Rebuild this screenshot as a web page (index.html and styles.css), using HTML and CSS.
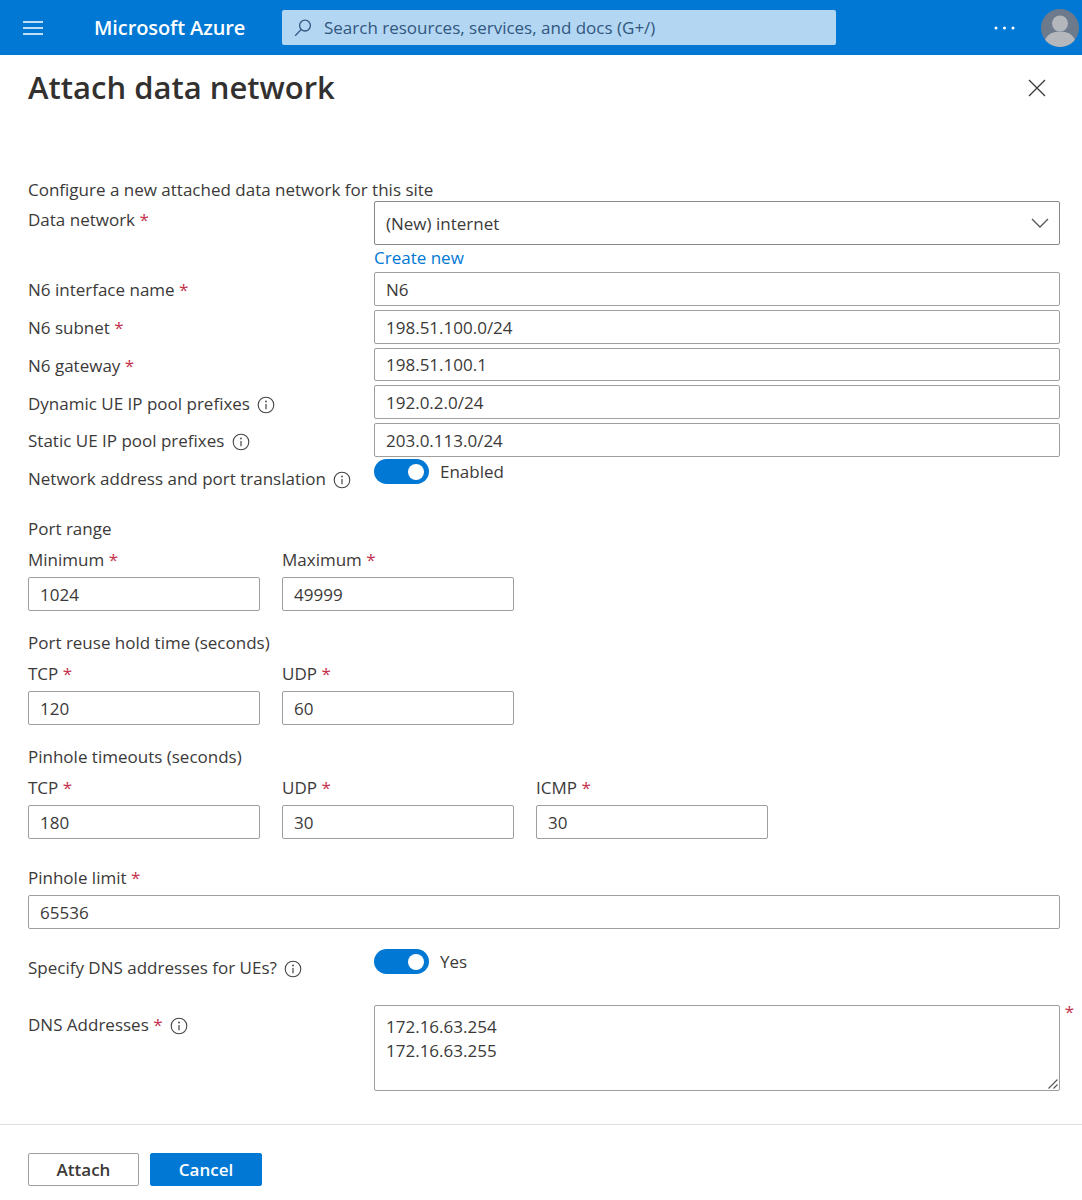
FILE: index.html
```html
<!DOCTYPE html>
<html lang="en">
<head>
    <meta charset="UTF-8">
    <meta name="viewport" content="width=device-width, initial-scale=1.0">
    <title>Attach data network</title>
    <link rel="stylesheet" href="styles.css">
</head>
<body>
    <header class="topbar">
        <svg class="menu-icon" width="20" height="14" viewBox="0 0 20 14"><path d="M0 1h20M0 7h20M0 13h20" stroke="#fff" stroke-width="1.4"/></svg>
        <div class="brand">Microsoft Azure</div>
        <div class="search">
            <svg width="18" height="18" viewBox="0 0 18 18" fill="none" stroke="#31567f" stroke-width="1.3"><circle cx="11" cy="6.6" r="5.4"/><path d="M7 10.6 1.2 16.8"/></svg>
            <span>Search resources, services, and docs (G+/)</span>
        </div>
        <svg class="more" width="21" height="4" viewBox="0 0 21 4" fill="#fff"><circle cx="2" cy="2" r="1.500"/><circle cx="10.500" cy="2" r="1.500"/><circle cx="19" cy="2" r="1.500"/></svg>
        <svg class="avatar" width="38" height="38" viewBox="0 0 38 38"><defs><clipPath id="avatarClip"><circle cx="19" cy="19" r="19"/></clipPath></defs><circle cx="19" cy="19" r="19" fill="#6c7a8c"/><g clip-path="url(#avatarClip)" fill="#b4b8bd"><circle cx="19" cy="14.5" r="8"/><path d="M3 38c0-11 6-15.500 16-15.500S35 27 35 38z"/></g></svg>
    </header>

    <main class="panel">
        <div class="title-row">
            <h1>Attach data network</h1>
            <svg class="close" width="18" height="18" viewBox="0 0 18 18"><path d="M1 1l16 16M17 1 1 17" stroke="#3b3a39" stroke-width="1.3"/></svg>
        </div>

        <p class="intro">Configure a new attached data network for this site</p>

        <div class="row row-select">
            <label>Data network <span class="req">*</span></label>
            <div>
                <div class="select">
                    <span>(New) internet</span>
                    <svg width="18" height="10" viewBox="0 0 18 10" fill="none" stroke="#555" stroke-width="1.3"><path d="M1 1l8 8 8-8"/></svg>
                </div>
                <a class="link" href="#">Create new</a>
            </div>
        </div>

        <div class="stack">
            <div class="row">
                <label>N6 interface name <span class="req">*</span></label>
                <input class="input" value="N6">
            </div>
            <div class="row">
                <label>N6 subnet <span class="req">*</span></label>
                <input class="input" value="198.51.100.0/24">
            </div>
            <div class="row">
                <label>N6 gateway <span class="req">*</span></label>
                <input class="input" value="198.51.100.1">
            </div>
            <div class="row">
                <label>Dynamic UE IP pool prefixes <svg class="info"><use href="#infoIcon"/></svg></label>
                <input class="input" value="192.0.2.0/24">
            </div>
            <div class="row">
                <label>Static UE IP pool prefixes <svg class="info"><use href="#infoIcon"/></svg></label>
                <input class="input" value="203.0.113.0/24">
            </div>
        </div>

        <div class="row row-toggle nat">
            <label>Network address and port translation <svg class="info"><use href="#infoIcon"/></svg></label>
            <div class="toggle-wrap"><span class="toggle"></span><span>Enabled</span></div>
        </div>

        <section class="group group-port">
            <h2>Port range</h2>
            <div class="fields">
                <div class="field">
                    <label>Minimum <span class="req">*</span></label>
                    <input class="input" value="1024">
                </div>
                <div class="field">
                    <label>Maximum <span class="req">*</span></label>
                    <input class="input" value="49999">
                </div>
            </div>
        </section>

        <section class="group">
            <h2>Port reuse hold time (seconds)</h2>
            <div class="fields">
                <div class="field">
                    <label>TCP <span class="req">*</span></label>
                    <input class="input" value="120">
                </div>
                <div class="field">
                    <label>UDP <span class="req">*</span></label>
                    <input class="input" value="60">
                </div>
            </div>
        </section>

        <section class="group">
            <h2>Pinhole timeouts (seconds)</h2>
            <div class="fields">
                <div class="field">
                    <label>TCP <span class="req">*</span></label>
                    <input class="input" value="180">
                </div>
                <div class="field">
                    <label>UDP <span class="req">*</span></label>
                    <input class="input" value="30">
                </div>
                <div class="field">
                    <label>ICMP <span class="req">*</span></label>
                    <input class="input" value="30">
                </div>
            </div>
        </section>

        <section class="group group-limit">
            <label>Pinhole limit <span class="req">*</span></label>
            <input class="input" value="65536">
        </section>

        <div class="row row-toggle dns-toggle">
            <label>Specify DNS addresses for UEs? <svg class="info"><use href="#infoIcon"/></svg></label>
            <div class="toggle-wrap"><span class="toggle"></span><span>Yes</span></div>
        </div>

        <div class="row row-dns">
            <label>DNS Addresses <span class="req">*</span> <svg class="info"><use href="#infoIcon"/></svg></label>
            <div class="dns-box">
                <textarea class="input dns-input">172.16.63.254
172.16.63.255</textarea>
                <span class="req dns-req">*</span>
                <svg class="grip" width="10" height="10" viewBox="0 0 10 10" fill="none" stroke="#555" stroke-width="1.1"><path d="M.5 9.500l9-9M5.500 9.500l4-4"/></svg>
            </div>
        </div>
    </main>

    <footer class="actions">
        <button class="btn">Attach</button>
        <button class="btn btn-primary">Cancel</button>
    </footer>

    <svg class="icon-defs" width="0" height="0">
        <symbol id="infoIcon" viewBox="0 0 18 18">
            <circle cx="9" cy="9" r="7.8" fill="none" stroke="#444" stroke-width="1.1"/>
            <path d="M9 8v5.200" stroke="#444" stroke-width="1.2"/>
            <circle cx="9" cy="5.500" r=".9" fill="#444"/>
        </symbol>
    </svg>
</body>
</html>
```

FILE: styles.css
```css
* {
    box-sizing: border-box;
}
body {
    margin: 0;
    font-family: "Open Sans", "Noto Sans", Arial, sans-serif;
    font-size: 17px;
    color: #3b3a39;
    background: #fff;
}
.topbar {
    display: flex;
    align-items: center;
    height: 55px;
    background: #0078d4;
    padding-left: 23px;
    color: #fff;
}
.brand {
    margin-left: 51px;
    width: 188px;
    font-size: 20px;
    font-weight: 600;
    letter-spacing: -0.1px;
    white-space: nowrap;
}
.search {
    display: flex;
    align-items: center;
    gap: 12px;
    width: 554px;
    height: 35px;
    padding-left: 12px;
    background: #b3d6f2;
    border-radius: 2px;
    color: #31567f;
    white-space: nowrap;
}
.more {
    margin-left: 158px;
}
.avatar {
    margin-left: 26px;
    flex: none;
}
.panel {
    padding: 0 22px 0 28px;
}
.title-row {
    display: flex;
    justify-content: space-between;
    align-items: center;
    height: 64px;
}
h1 {
    margin: 0;
    font-size: 31px;
    font-weight: 600;
    color: #323130;
}
.close {
    margin: 2px 14px 0 0;
}
.intro {
    margin: 59px 0 0;
    line-height: 24px;
    height: 23px;
}
.row {
    display: grid;
    grid-template-columns: 346px 1fr;
    align-items: center;
}
.stack label {
    padding-top: 2px;
}
label {
    white-space: nowrap;
}
.req {
    color: #c4314b;
}
.info {
    width: 18px;
    height: 18px;
    margin-left: 3px;
    vertical-align: -4px;
}
.icon-defs {
    position: absolute;
}
.row-select {
    align-items: start;
}
.row-select label {
    padding-top: 7px;
}
.select {
    display: flex;
    justify-content: space-between;
    align-items: center;
    height: 44px;
    padding: 0 10px 0 11px;
    border: 1px solid #8a8886;
    border-radius: 2px;
}
.link {
    display: block;
    height: 27px;
    line-height: 25px;
    color: #0078d4;
    text-decoration: none;
}
.stack {
    display: flex;
    flex-direction: column;
    gap: 4px;
}
.input {
    display: block;
    width: 100%;
    height: 33.75px;
    padding: 1px 11px 0;
    border: 1px solid #a19f9d;
    border-radius: 2px;
    font: inherit;
    color: #3b3a39;
    background: #fff;
    outline: none;
}
.row-toggle {
    align-items: start;
}
.nat {
    margin-top: 2px;
}
.nat label {
    padding-top: 8px;
}
.toggle-wrap {
    display: flex;
    align-items: center;
    gap: 11px;
    height: 25px;
}
.toggle {
    position: relative;
    width: 55px;
    height: 25px;
    border-radius: 13px;
    background: #0078d4;
}
.toggle::after {
    content: "";
    position: absolute;
    top: 5px;
    right: 5px;
    width: 16px;
    height: 16px;
    border-radius: 50%;
    background: #fff;
}
.group {
    margin-top: 20.5px;
}
.group h2 {
    margin: 0 0 7px;
    font-size: 17px;
    font-weight: 400;
    line-height: 24px;
}
.group-port {
    margin-top: 27px;
}
.fields {
    display: flex;
    gap: 22px;
}
.field {
    width: 232px;
}
.field label {
    display: block;
    line-height: 24px;
    margin-bottom: 5px;
}
.group-limit {
    margin-top: 27px;
}
.group-limit label {
    display: block;
    line-height: 24px;
    margin-bottom: 5px;
}
.dns-toggle {
    margin-top: 20px;
}
.dns-toggle label {
    padding-top: 7px;
}
.row-dns {
    margin-top: 26px;
    align-items: start;
}
.row-dns label {
    padding-top: 8px;
}
.dns-box {
    position: relative;
}
.dns-input {
    height: 86px;
    padding-top: 9px;
    line-height: 24px;
    resize: none;
}
.dns-req {
    position: absolute;
    top: -5px;
    right: -14px;
}
.grip {
    position: absolute;
    right: 2px;
    bottom: 2px;
}
.actions {
    display: flex;
    gap: 11px;
    margin-top: 33px;
    padding: 28px 0 0 28px;
    border-top: 1px solid #e1dfdd;
}
.btn {
    width: 111px;
    height: 33px;
    padding: 0;
    border: 1px solid #a19f9d;
    border-radius: 2px;
    background: #fff;
    color: #3b3a39;
    font: inherit;
    font-weight: 600;
}
.btn-primary {
    width: 112px;
    border-color: #0078d4;
    background: #0078d4;
    color: #fff;
}
```
